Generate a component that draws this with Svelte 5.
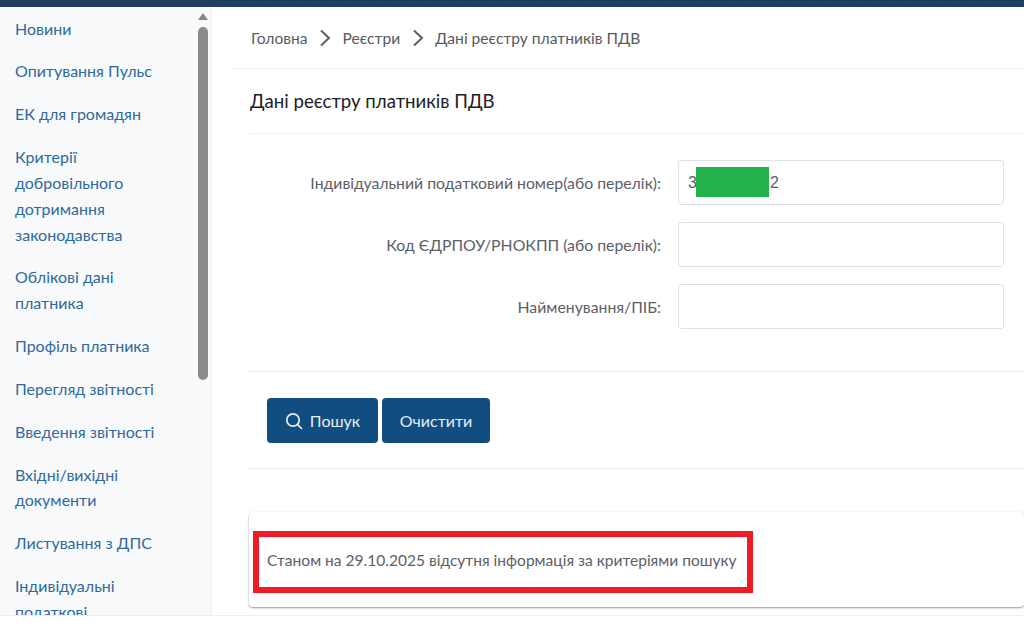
<script>
  const items = [
    ['Новини'], ['Опитування Пульс'], ['ЕК для громадян'],
    ['Критерії', 'добровільного', 'дотримання', 'законодавства'],
    ['Облікові дані', 'платника'], ['Профіль платника'], ['Перегляд звітності'],
    ['Введення звітності'], ['Вхідні/вихідні', 'документи'], ['Листування з ДПС'],
    ['Індивідуальні', 'податкові']
  ];
  const fields = [
    ['Індивідуальний податковий номер(або перелік):', true],
    ['Код ЄДРПОУ/РНОКПП (або перелік):', false],
    ['Найменування/ПІБ:', false]
  ];
</script>

<div class="page">
  <div class="topbar"></div>
  <div class="body">
    <aside class="side">
      <nav class="menu">
        {#each items as lines}
          <a class="item" href="#top">{#each lines as l}<span>{l}</span>{/each}</a>
        {/each}
      </nav>
      <div class="scroll">
        <div class="arrow"></div>
        <div class="thumb"></div>
      </div>
    </aside>
    <main class="main">
      <div class="crumbs">
        <span>Головна</span>
        <svg width="12" height="18" viewBox="0 0 12 18"><path d="M2 1.5 L10 9 L2 16.5" fill="none" stroke="#5a5f66" stroke-width="2"/></svg>
        <span>Реєстри</span>
        <svg width="12" height="18" viewBox="0 0 12 18"><path d="M2 1.5 L10 9 L2 16.5" fill="none" stroke="#5a5f66" stroke-width="2"/></svg>
        <span>Дані реєстру платників ПДВ</span>
      </div>
      <div class="content">
        <h1>Дані реєстру платників ПДВ</h1>
        <form class="form">
          {#each fields as [label, filled]}
            <div class="row">
              <label class="lbl" for={label}>{label}</label>
              <div class="input" id={label}>
                {#if filled}<span class="val">3</span><span class="mask"></span><span class="val">2</span>{/if}
              </div>
            </div>
          {/each}
        </form>
        <div class="actions">
          <button type="button" class="btn search">
            <svg width="18" height="18" viewBox="0 0 18 18"><circle cx="8" cy="8" r="6.2" fill="none" stroke="#e6eef5" stroke-width="1.7"/><path d="M12.6 12.6 L17 17" stroke="#e6eef5" stroke-width="1.7"/></svg>
            Пошук
          </button>
          <button type="button" class="btn clear">Очистити</button>
        </div>
        <div class="card">
          <p>Станом на 29.10.2025 відсутня інформація за критеріями пошуку</p>
          <div class="mark"></div>
        </div>
      </div>
    </main>
  </div>
</div>

<style>
  :global(body) { margin: 0; background: #fff; overflow: hidden; }
  .page { width: 1024px; height: 625px; overflow: hidden; font-family: Lato, "Open Sans", sans-serif; font-size: 15px; color: #5c6068; }
  .topbar { height: 7px; background: #1f3f60; }
  .body { display: flex; height: 609px; box-sizing: border-box; border-bottom: 1px solid #eceef1; }
  .side { position: relative; width: 211px; flex: none; background: #f8f9fb; border-right: 1px solid #eff0f3; overflow: hidden; }
  .menu { width: 196px; }
  .item { display: block; padding: 8.5px 15px; color: #2f6a9b; text-decoration: none; line-height: 25.85px; font-size: 16px; }
  .item span { display: block; white-space: nowrap; }
  .scroll { position: absolute; right: 3px; top: 0; width: 11px; display: flex; flex-direction: column; align-items: center; }
  .arrow { margin-top: 6px; width: 0; height: 0; border-left: 5px solid transparent; border-right: 5px solid transparent; border-bottom: 7px solid #888; }
  .thumb { margin-top: 7px; width: 10px; height: 353px; background: #8a8a8a; border-radius: 5px; }
  .main { flex: 1; min-width: 0; padding-left: 21px; }
  .crumbs { display: flex; align-items: center; gap: 11px; padding-left: 18px; border-bottom: 1px solid #f0f1f3; font-size: 15.6px; box-sizing: border-box; height: 62px; color: #565a61; }
  .crumbs svg { margin: 0 0.5px; }
  .content { padding-left: 16px; }
  h1 { margin: 0; height: 65px; box-sizing: border-box; padding-left: 1px; border-bottom: 1px solid #eef0f2; font-size: 18.6px; font-weight: 400; color: #1d2025; line-height: 65px; }
  .form { height: 238px; box-sizing: border-box; padding-top: 26px; border-bottom: 1px solid #e8eaed; display: flex; flex-direction: column; gap: 17px; }
  .row { display: flex; align-items: center; }
  .lbl { width: 412px; text-align: right; font-size: 15.8px; color: #5c6068; }
  .input { margin-left: 17px; width: 326px; height: 45px; box-sizing: border-box; border: 1.5px solid #dfe2e8; border-radius: 3px; display: flex; align-items: center; padding-left: 9px; background: #fff; }
  .val { font-family: "Liberation Sans", sans-serif; font-size: 16px; color: #5c6068; }
  .mask { width: 73px; height: 30px; background: #22b14c; margin: 0 1px 2px -1px; }
  .actions { height: 97px; box-sizing: border-box; padding: 26px 0 0 18px; border-bottom: 1px solid #e8eaed; display: flex; gap: 4px; align-items: flex-start; }
  .btn { height: 45px; background: #124d80; color: #e6eef5; border: none; border-radius: 4px; font: inherit; font-size: 16px; display: flex; align-items: center; justify-content: center; gap: 7px; padding: 0; }
  .search { width: 111px; }
  .clear { width: 108px; }
  .card { position: relative; margin-top: 43px; height: 95px; box-sizing: border-box; border-radius: 4px; background: #fff; box-shadow: 0 1px 2px rgba(0,0,0,.4), 0 0 3px rgba(0,0,0,.04); display: flex; align-items: center; padding-left: 18px; }
  .card p { margin: 0; font-size: 15.55px; padding-top: 1px; }
  .mark { position: absolute; left: 4px; top: 19px; width: 500px; height: 62px; box-sizing: border-box; border: 6px solid #ed1c24; }
</style>
